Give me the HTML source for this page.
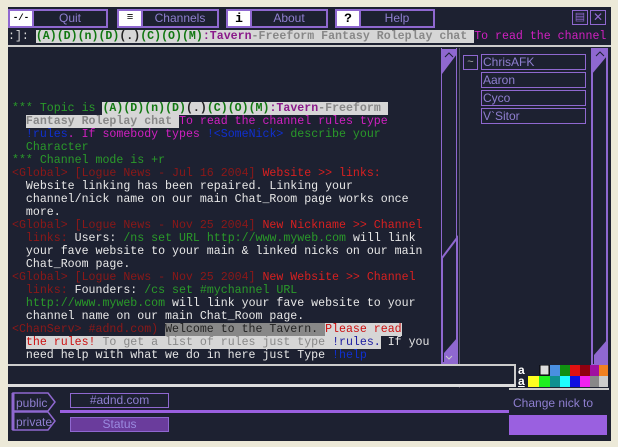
<!DOCTYPE html>
<html><head><style>
body{margin:0;width:618px;height:447px;background:#ece9d8;position:relative;overflow:hidden;font-family:"Liberation Sans",sans-serif}
.a{position:absolute}
.dark{background:#1d2131}
.btn{position:absolute;top:9px;height:15px;border:2px solid #8f68d0;background:#1d2131;color:#8f7fd0;font-size:12px;line-height:15px;text-align:center;box-sizing:content-box}
.ic{position:absolute;top:9px;width:22px;height:15px;background:#fff;border:2px solid #8f68d0;font:bold 13px "Liberation Mono",monospace;line-height:15px;text-align:center;color:#000}
pre{margin:0;font-family:"Liberation Mono",monospace;font-size:11.6px;line-height:13px;color:#e8e8e8}
.g{color:#2a9a2a}.m{color:#d020c0}.b{color:#1030d0}.r{color:#8c1818}.R{color:#d82020}.gb{background:#d6d6d6;color:#888}.gg{color:#117711}.gr{background:#888;color:#222}.lb{background:#d6d6d6;color:#cc1010}.lw{background:#d6d6d6;color:#1a1aa0}
.nick{position:absolute;left:481px;width:102px;height:14px;border:1px solid #8f68d0;color:#8f7fd0;font-size:12px;line-height:14px;padding-left:1px}
</style></head><body>
<div class="a dark" style="left:8px;top:7px;width:603px;height:434px"></div>
<div class="ic" style="left:8px;font-size:9px">-/-</div>
<div class="btn" style="left:32px;width:72px">Quit</div>
<div class="ic" style="left:117px;font-size:11px">&#8801;</div>
<div class="btn" style="left:141px;width:74px">Channels</div>
<div class="ic" style="left:226px">i</div>
<div class="btn" style="left:250px;width:74px">About</div>
<div class="ic" style="left:335px">?</div>
<div class="btn" style="left:359px;width:72px">Help</div>
<div class="a" style="left:572px;top:10px;width:14px;height:13px;border:1px solid #8f68d0;color:#8f68d0;font-size:11px;line-height:13px;text-align:center">&#9636;</div>
<div class="a" style="left:590px;top:10px;width:14px;height:13px;border:1px solid #8f68d0;color:#8f68d0;font-size:12px;line-height:13px;text-align:center">&#10005;</div>
<pre class="a" style="left:8px;top:29px;width:602px;height:15px;line-height:15px;overflow:hidden;white-space:pre;background:#1d2131;color:#ddd">:]: <span style="background:#d6d6d6"><b class="gg">(A)(D)(n)(D)</b><b style="color:#222">(.)</b><b class="gg">(C)(O)(M)</b><b style="color:#8a1a8a">:Tavern</b><b style="color:#888">-Freeform Fantasy Roleplay chat </b></span><span class="m">To read the channel</span></pre>
<div class="a" style="left:8px;top:45px;width:603px;height:2px;background:#ccc"></div>
<div class="a" style="left:10px;top:48px;width:430px;height:316px;background:#1d2131"></div>
<pre class="a" style="left:12px;top:102px;white-space:pre"><span class="g">*** Topic is </span><span style="background:#d6d6d6"><b class="gg">(A)(D)(n)(D)</b><b style="color:#222">(.)</b><b class="gg">(C)(O)(M)</b><b style="color:#8a1a8a">:Tavern</b><b style="color:#888">-Freeform </b></span>
  <span class="gb"><b>Fantasy Roleplay chat </b></span><span class="m">To read the channel rules type</span>
  <span class="b">!rules</span><span class="m">. If somebody types </span><span class="b">!&lt;SomeNick&gt;</span><span class="g"> describe your</span>
<span class="g">  Character</span>
<span class="g">*** Channel mode is +r</span>
<span class="r">&lt;Global&gt; [Logue News - Jul 16 2004] </span><span class="R">Website &gt;&gt; links:</span>
  Website linking has been repaired. Linking your
  channel/nick name on our main Chat_Room page works once
  more.
<span class="r">&lt;Global&gt; [Logue News - Nov 25 2004] </span><span class="R">New Nickname &gt;&gt; Channel</span>
  <span class="r">links:</span> Users: <span class="g">/ns set URL http://www.myweb.com</span> will link
  your fave website to your main &amp; linked nicks on our main
  Chat_Room page.
<span class="r">&lt;Global&gt; [Logue News - Nov 25 2004] </span><span class="R">New Website &gt;&gt; Channel</span>
  <span class="r">links:</span> Founders: <span class="g">/cs set #mychannel URL</span>
  <span class="g">http://www.myweb.com</span> will link your fave website to your
  channel name on our main Chat_Room page.
<span class="r">&lt;ChanServ&gt; #adnd.com) </span><span class="gr">Welcome to the Tavern. </span><span class="lb">Please read</span>
  <span class="lb">the rules!</span><span class="gb"> To get a list of rules just type </span><span class="lw">!rules.</span> If you
  need help with what we do in here just Type <span class="b">!help</span></pre>
<div class="a" style="left:441px;top:48px;width:16px;height:316px;background:#1d2131;border-left:1px solid #8f68d0;border-right:1px solid #8f68d0;box-sizing:border-box"></div>
<svg class="a" style="left:441px;top:48px" width="17" height="316"><path d="M1 1H16V6L1 26Z" fill="#8f68d0"/><path d="M4 9L8 5L12 9" stroke="#1d2131" fill="none"/><path d="M16 190L1 210V315H16Z" fill="none" stroke="#8f68d0" stroke-width="2"/><path d="M16 290L3 305V315H16Z" fill="#8f68d0"/><path d="M5 308L8 311L11 308" stroke="#ccc" fill="none"/></svg>
<div class="a" style="left:459px;top:48px;width:131px;height:340px;background:#1d2131;border-left:1px solid #556"></div>
<div class="a" style="left:463px;top:55px;width:13px;height:13px;border:1px solid #8f68d0;color:#aaa;font-size:11px;line-height:12px;text-align:center">~</div>
<div class="nick" style="top:54px">ChrisAFK</div>
<div class="nick" style="top:72px">Aaron</div>
<div class="nick" style="top:90px">Cyco</div>
<div class="nick" style="top:108px">V`Sitor</div>
<svg class="a" style="left:591px;top:48px" width="17" height="318"><rect x="1" y="1" width="15" height="316" fill="none" stroke="#8f68d0" stroke-width="2"/><path d="M1 1H16V8L1 26Z" fill="#8f68d0"/><path d="M5 8L9 4L13 8" stroke="#1d2131" fill="none"/><path d="M16 292L3 307V317H16Z" fill="#8f68d0"/></svg>
<div class="a" style="left:8px;top:364px;width:508px;height:2px;background:#ccc"></div>
<div class="a" style="left:9px;top:366px;width:505px;height:18px;background:#1d2131;border-right:2px solid #ccc"></div>
<div class="a" style="left:8px;top:384px;width:508px;height:3px;background:#ddd"></div>
<div class="a" style="left:518px;top:365px;color:#fff;font-weight:bold;font-size:12px;line-height:11px">a<br><u>a</u></div>
<svg class="a" style="left:528px;top:365px" width="80" height="22"><g>
<rect x="0" y="0" width="10" height="11" fill="#1d2131"/><rect x="12" y="0" width="9" height="10" fill="#ddd" stroke="#000"/><rect x="22" y="0" width="10" height="11" fill="#4a8fe0"/><rect x="32" y="0" width="10" height="11" fill="#109010"/><rect x="42" y="0" width="10" height="11" fill="#e01010"/><rect x="52" y="0" width="10" height="11" fill="#900010"/><rect x="62" y="0" width="9" height="11" fill="#a010a0"/><rect x="71" y="0" width="9" height="11" fill="#f08020"/>
<rect x="0" y="11" width="11" height="11" fill="#ffff20"/><rect x="11" y="11" width="11" height="11" fill="#20f020"/><rect x="22" y="11" width="10" height="11" fill="#109090"/><rect x="32" y="11" width="10" height="11" fill="#20ffff"/><rect x="42" y="11" width="10" height="11" fill="#1010e0"/><rect x="52" y="11" width="10" height="11" fill="#f020f0"/><rect x="62" y="11" width="9" height="11" fill="#888"/><rect x="71" y="11" width="9" height="11" fill="#ccc"/></g></svg>
<div class="a" style="left:509px;top:388px;height:26px;background:#1d2131;border-top:2px solid #ccc;color:#8f7fd0;font-size:12px;line-height:26px;padding-left:4px;box-sizing:border-box;width:100px">Change nick to</div>
<div class="a" style="left:509px;top:415px;width:98px;height:20px;background:#9a60e0"></div>
<div class="a" style="left:60px;top:410px;width:449px;height:3px;background:#9a60e0"></div>
<svg class="a" style="left:11px;top:392px" width="52" height="42"><path d="M2 1H37L44 10L37 19H2Z" fill="#1d2131" stroke="#8f68d0" stroke-width="1.5"/><path d="M2 20H37L44 29L37 38H2Z" fill="#1d2131" stroke="#8f68d0" stroke-width="1.5"/><path d="M2 1V38" stroke="#8f68d0" stroke-width="3"/><text x="5" y="15" fill="#8f7fd0" font-size="12" font-family="Liberation Sans">public</text><text x="5" y="34" fill="#8f7fd0" font-size="12" font-family="Liberation Sans">private</text></svg>
<div class="a" style="left:70px;top:393px;width:97px;height:13px;border:1px solid #8f68d0;color:#8f7fd0;font-size:12px;line-height:13px;text-align:center">#adnd.com</div>
<div class="a" style="left:70px;top:417px;width:97px;height:13px;border:1px solid #8f68d0;background:#6a3c9c;color:#9a8ae0;font-size:12px;line-height:13px;text-align:center">Status</div>
</body></html>
